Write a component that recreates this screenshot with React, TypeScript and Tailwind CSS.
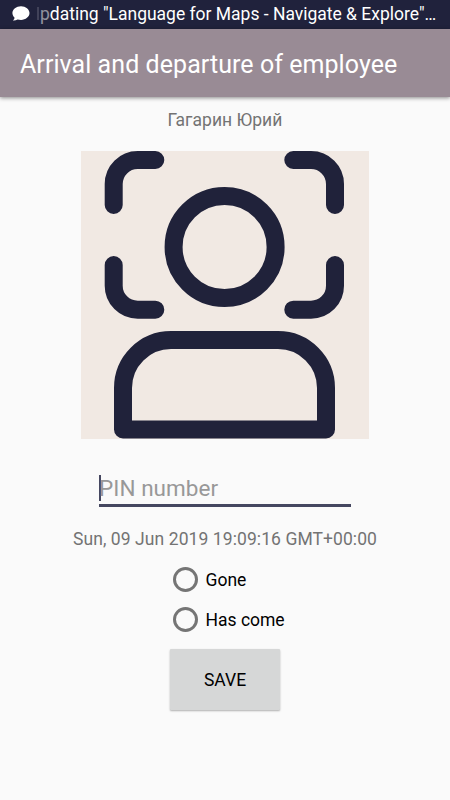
import clsx from "clsx";
import { useState } from "react";

const OPTIONS = ["Gone", "Has come"];

function ChatBubbleIcon() {
  return (
    <svg width="18" height="16" viewBox="0 0 18 16" fill="#fff" aria-hidden="true">
      <path d="M9 .2C4.3.2.4 3.4.4 7.1c0 1.8.9 3.4 2.2 4.6-.1 1-.7 1.9-1.7 2.7 1.8.1 3.4-.2 4.7-1 1 .3 2.2.5 3.4.5 4.7 0 8.5-3 8.500-6.800S13.700.2 9 .2z" />
    </svg>
  );
}

function FaceScanIcon() {
  return (
    <svg
      viewBox="0 0 287.5 287.5"
      fill="none"
      stroke="#20223a"
      strokeWidth="18"
      strokeLinecap="round"
      strokeLinejoin="round"
      className="h-full w-full"
      aria-hidden="true"
    >
      <path d="M32.7 54V33a24 24 0 0 1 24-24H74.3" />
      <path d="M212.3 9H230a24 24 0 0 1 24 24v21" />
      <path d="M32.7 114v20.7a24 24 0 0 0 24 24H74.3" />
      <path d="M212.3 158.7H230a24 24 0 0 0 24-24V114" />
      <circle cx="143.6" cy="96" r="51" />
      <path d="M42 278.5V237a48 48 0 0 1 48-48h107a48 48 0 0 1 48 48v41.5z" />
    </svg>
  );
}

function StatusBar() {
  return (
    <div className="flex h-[29px] shrink-0 items-start bg-[#20223c] pl-[12px] pt-[6px] text-white">
      <ChatBubbleIcon />
      {/* scrolling ticker, faded at its left edge */}
      <span className="-mt-[6px] ml-[7px] flex whitespace-nowrap text-[17.5px] leading-[28px] tracking-[-0.01px]">
        <span className="mr-[1px] mt-[7px] h-[13px] w-[2px] bg-white/15" />
        <span className="opacity-50">p</span>
        <span>dating "Language for Maps - Navigate &amp; Explore"…</span>
      </span>
    </div>
  );
}

export default function App() {
  const [selected, setSelected] = useState<string | null>(null);

  return (
    <div className="flex h-[800px] w-[450px] flex-col overflow-hidden bg-[#fafafa] font-['Roboto',sans-serif]">
      <StatusBar />
      <header className="flex h-[68px] shrink-0 items-center bg-[#998b95] pl-[20px] pt-[3px] shadow-[0_1px_4px_rgba(0,0,0,0.45)]">
        <h1 className="whitespace-nowrap text-[25px] leading-[30px] tracking-[0.06px] text-white">
          Arrival and departure of employee
        </h1>
      </header>

      <main className="flex flex-col items-center">
        <p className="mt-[13px] text-[17.5px] leading-[20px] tracking-[0.04px] text-[#737373]">Гагарин Юрий</p>
        <div className="mt-[21px] h-[287.5px] w-[287.5px] bg-[#f1e9e3]">
          <FaceScanIcon />
        </div>

        <div className="mt-[36px] flex h-[32.5px] w-[252px] items-start border-b-[3px] border-[#454760]">
          <span className="h-[26px] w-[2px] bg-[#454760]" />
          <span className="-ml-[2px] whitespace-nowrap text-[22.5px] leading-[27px] tracking-[0.05px] text-[#989898]">
            PIN number
          </span>
        </div>

        <p className="mt-[22px] whitespace-nowrap text-[17.5px] leading-[20px] tracking-[0.08px] text-[#737373]">
          Sun, 09 Jun 2019 19:09:16 GMT+00:00
        </p>

        <div role="radiogroup" className="ml-[7px] mt-[10px] flex w-[112px] flex-col">
          {OPTIONS.map((option) => (
            <button
              key={option}
              role="radio"
              aria-checked={selected === option}
              onClick={() => setSelected(option)}
              className="flex h-[40px] items-center gap-[8px] whitespace-nowrap text-[17.5px] leading-[20px] text-black"
            >
              <span className="flex h-[25px] w-[25px] shrink-0 items-center justify-center rounded-full border-[3px] border-[#757575]">
                <span
                  className={clsx("h-[12px] w-[12px] rounded-full", selected === option && "bg-[#757575]")}
                />
              </span>
              <span className="pt-[2px]">{option}</span>
            </button>
          ))}
        </div>

        <button className="mt-[10px] h-[61px] w-[110px] rounded-[1px] bg-[#d6d7d7] pt-[2px] text-[17.5px] text-black shadow-[0_1px_2px_rgba(0,0,0,0.3)]">
          SAVE
        </button>
      </main>
    </div>
  );
}
